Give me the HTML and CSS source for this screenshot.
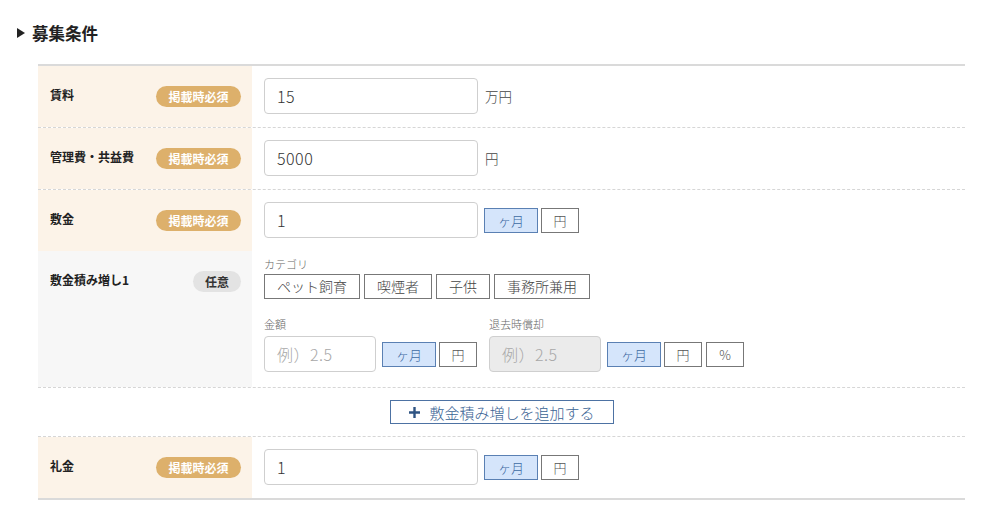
FILE: index.html
```html
<!DOCTYPE html>
<html lang="ja">
<head>
<meta charset="utf-8">
<title>募集条件</title>
<link rel="stylesheet" href="styles.css">
</head>
<body>
<div class="page">
  <h2 class="section-title"><span class="tri"></span>募集条件</h2>
  <div class="table">
    <div class="row">
      <div class="label req"><span class="label-text">賃料</span><span class="badge must">掲載時必須</span></div>
      <div class="field"><div class="input">15</div><span class="unit">万円</span></div>
    </div>
    <div class="row">
      <div class="label req"><span class="label-text">管理費・共益費</span><span class="badge must">掲載時必須</span></div>
      <div class="field"><div class="input">5000</div><span class="unit">円</span></div>
    </div>
    <div class="row no-line">
      <div class="label req"><span class="label-text">敷金</span><span class="badge must">掲載時必須</span></div>
      <div class="field"><div class="input">1</div>
        <div class="toggles"><span class="tg on">ヶ月</span><span class="tg">円</span></div>
      </div>
    </div>
    <div class="row">
      <div class="label opt"><span class="label-text">敷金積み増し1</span><span class="badge any">任意</span></div>
      <div class="field-stack">
        <div class="sub-label">カテゴリ</div>
        <div class="cats"><span class="cat">ペット飼育</span><span class="cat">喫煙者</span><span class="cat">子供</span><span class="cat">事務所兼用</span></div>
        <div class="groups">
          <div class="group">
            <div class="sub-label">金額</div>
            <div class="group-row"><div class="input small placeholder">例）2.5</div>
              <div class="toggles"><span class="tg on">ヶ月</span><span class="tg">円</span></div>
            </div>
          </div>
          <div class="group">
            <div class="sub-label">退去時償却</div>
            <div class="group-row"><div class="input small placeholder disabled">例）2.5</div>
              <div class="toggles"><span class="tg on">ヶ月</span><span class="tg">円</span><span class="tg pct">%</span></div>
            </div>
          </div>
        </div>
      </div>
    </div>
    <div class="add-row">
      <button class="add-btn"><svg width="13" height="13" viewBox="0 0 13 13"><path d="M6.5 1v11M1 6.5h11" stroke="#2f5483" stroke-width="2.4" fill="none"/></svg>敷金積み増しを追加する</button>
    </div>
    <div class="row last">
      <div class="label req"><span class="label-text">礼金</span><span class="badge must">掲載時必須</span></div>
      <div class="field"><div class="input">1</div>
        <div class="toggles"><span class="tg on">ヶ月</span><span class="tg">円</span></div>
      </div>
    </div>
  </div>
</div>
</body>
</html>
```
FILE: styles.css
```css
* { box-sizing: border-box; }
body {
  margin: 0;
  background: #fff;
  font-family: "Noto Sans CJK JP", "Noto Sans", sans-serif;
  color: #222;
}
.page { padding: 22px 35px 0 17px; }
.section-title {
  margin: 0 0 20px 0;
  font-size: 16.5px;
  line-height: 22px;
  font-weight: 700;
  display: flex;
  align-items: center;
  color: #222;
}
.tri {
  width: 0; height: 0;
  border-top: 5px solid transparent;
  border-bottom: 5px solid transparent;
  border-left: 8px solid #222;
  margin-right: 7px;
}
.table {
  margin-left: 21px;
  width: 927px;
  border-top: 2px solid #dadada;
  border-bottom: 2px solid #dadada;
}
.row {
  display: grid;
  grid-template-columns: 214px 1fr;
  border-bottom: 1px dashed #d6d6d6;
}
.row.no-line, .row.last { border-bottom: none; }
.label {
  display: flex;
  justify-content: space-between;
  align-items: flex-start;
  padding: 20px 11px 0 12px;
}
.label.req { background: #fcf3e8; }
.label.opt { background: #f7f7f7; }
.label-text {
  font-size: 12px;
  font-weight: 700;
  line-height: 18px;
  color: #222;
}
.badge {
  height: 21px;
  border-radius: 11px;
  font-size: 12px;
  font-weight: 700;
  line-height: 21px;
  text-align: center;
}
.badge.must { width: 85px; background: #ddb06b; color: #fff; }
.badge.any { width: 48px; background: #e3e3e3; color: #333; font-size: 12px; }
.field {
  display: flex;
  align-items: center;
  padding: 12px 12px 13px;
}
.input {
  width: 214px;
  height: 36px;
  border: 1px solid #cfcfcf;
  border-radius: 4px;
  padding: 0 12px;
  font-size: 16px;
  letter-spacing: 0.5px;
  font-weight: 300;
  line-height: 34px;
  color: #333;
  background: #fff;
}
.input.small { width: 112px; }
.input.placeholder { color: #a8a8a8; }
.input.disabled { background: #ebebeb; }
.unit { margin-left: 7px; font-size: 13.5px; font-weight: 300; color: #444; }
.toggles { display: flex; gap: 3px; margin-left: 6px; }
.tg {
  height: 25px;
  width: 38px;
  border: 1px solid #777;
  background: #fff;
  font-size: 13px;
  font-weight: 300;
  line-height: 23px;
  text-align: center;
  color: #555;
}
.tg.on { width: 54px; background: #d5e5fb; border-color: #5a80b3; color: #3d6aa3; }
.tg.pct { margin-left: 1px; }
.field-stack { padding: 6px 12px 15px 12px; }
.sub-label { font-size: 11px; line-height: 15px; color: #666; font-weight: 300; }
.cats { display: flex; gap: 4px; margin-top: 2px; }
.cat {
  height: 25px;
  border: 1px solid #777;
  padding: 0 12px;
  font-size: 14px;
  font-weight: 300;
  line-height: 23px;
  color: #444;
  background: #fff;
}
.groups { display: flex; gap: 12px; margin-top: 18px; }
.group-row { display: flex; align-items: center; margin-top: 4px; }
.add-row {
  display: flex;
  justify-content: center;
  padding: 12px 0;
  border-bottom: 1px dashed #d6d6d6;
}
.add-btn {
  width: 224px;
  height: 24px;
  border: 1px solid #4d72a3;
  background: #fff;
  color: #3a6494;
  font-family: inherit;
  font-size: 15px;
  font-weight: 300;
  display: flex;
  align-items: center;
  justify-content: center;
  gap: 8px;
  padding: 0;
}
```
